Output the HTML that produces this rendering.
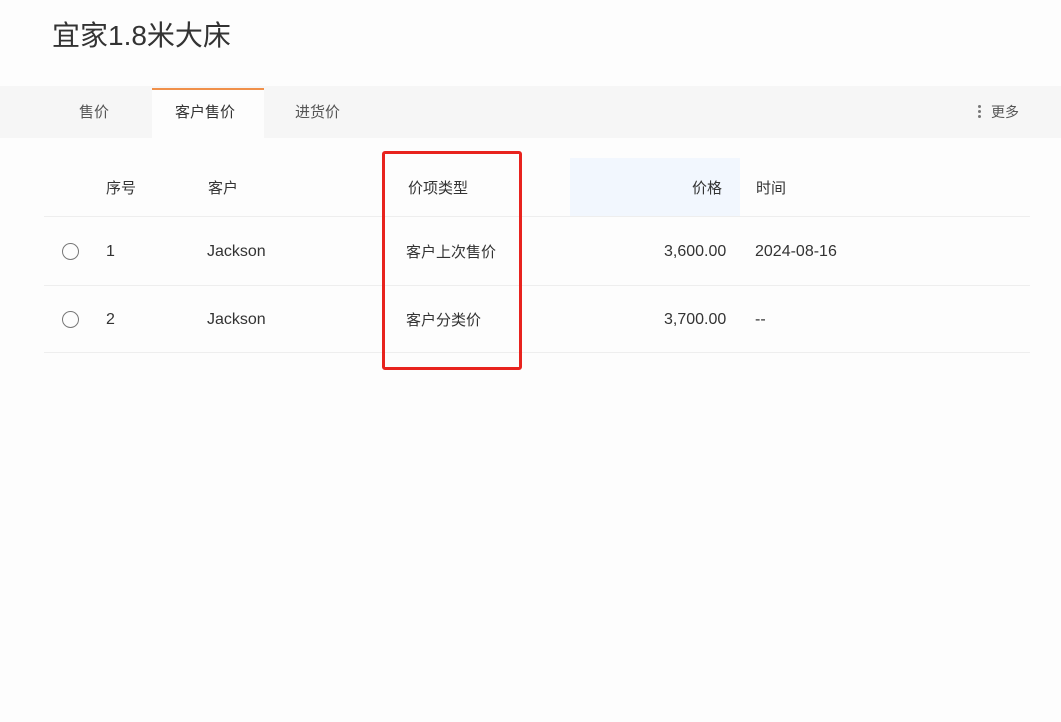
<!DOCTYPE html>
<html><head><meta charset="utf-8"><style>
*{margin:0;padding:0;box-sizing:border-box}
body{width:1061px;height:722px;background:#fdfdfd;font-family:"Liberation Sans","Noto Sans CJK SC",sans-serif;color:#333;position:relative;overflow:hidden}
.a{position:absolute;white-space:nowrap}
.t{font-size:15px;color:#333}
.l{font-size:16px;color:#333;top:243px}
</style></head><body>
<div class="a" style="left:52px;top:14px;font-size:28px;color:#333">宜家1.8米大床</div>
<div class="a" style="left:0;top:86px;width:1061px;height:52px;background:#f6f6f6"></div>
<div class="a" style="left:152px;top:88px;width:112px;height:50px;background:#fdfdfd;border-top:2px solid #f0904a"></div>
<div class="a t" style="left:79px;top:101px;color:#555">售价</div>
<div class="a t" style="left:175px;top:101px">客户售价</div>
<div class="a t" style="left:295px;top:101px;color:#555">进货价</div>
<div class="a" style="left:978px;top:105px;width:4px;height:14px">
<div style="width:3px;height:3px;border-radius:50%;background:#777;margin-bottom:2px"></div><div style="width:3px;height:3px;border-radius:50%;background:#777;margin-bottom:2px"></div><div style="width:3px;height:3px;border-radius:50%;background:#777"></div></div>
<div class="a" style="left:991px;top:102px;font-size:14px;color:#555">更多</div>
<div class="a" style="left:570px;top:158px;width:170px;height:58px;background:#f2f7fe"></div>
<div class="a t" style="left:106px;top:177px">序号</div>
<div class="a t" style="left:208px;top:177px">客户</div>
<div class="a t" style="left:408px;top:177px">价项类型</div>
<div class="a t" style="left:692px;top:177px">价格</div>
<div class="a t" style="left:756px;top:177px">时间</div>
<div class="a" style="left:44px;top:216px;width:986px;height:1px;background:#eee"></div>
<div class="a" style="left:44px;top:285px;width:986px;height:1px;background:#eee"></div>
<div class="a" style="left:44px;top:352px;width:986px;height:1px;background:#eee"></div>
<div class="a" style="left:62px;top:243px;width:17px;height:17px;border:1px solid #777;border-radius:50%"></div>
<div class="a" style="left:62px;top:311px;width:17px;height:17px;border:1px solid #777;border-radius:50%"></div>
<div class="a l" style="left:106px">1</div>
<div class="a l" style="left:207px">Jackson</div>
<div class="a t" style="left:406px;top:241px">客户上次售价</div>
<div class="a l" style="left:664px">3,600.00</div>
<div class="a l" style="left:755px">2024-08-16</div>
<div class="a l" style="left:106px;top:311px">2</div>
<div class="a l" style="left:207px;top:311px">Jackson</div>
<div class="a t" style="left:406px;top:309px">客户分类价</div>
<div class="a l" style="left:664px;top:311px">3,700.00</div>
<div class="a l" style="left:755px;top:311px">--</div>
<div class="a" style="left:382px;top:151px;width:140px;height:219px;border:3px solid #e8231e;border-radius:3px"></div>
</body></html>
